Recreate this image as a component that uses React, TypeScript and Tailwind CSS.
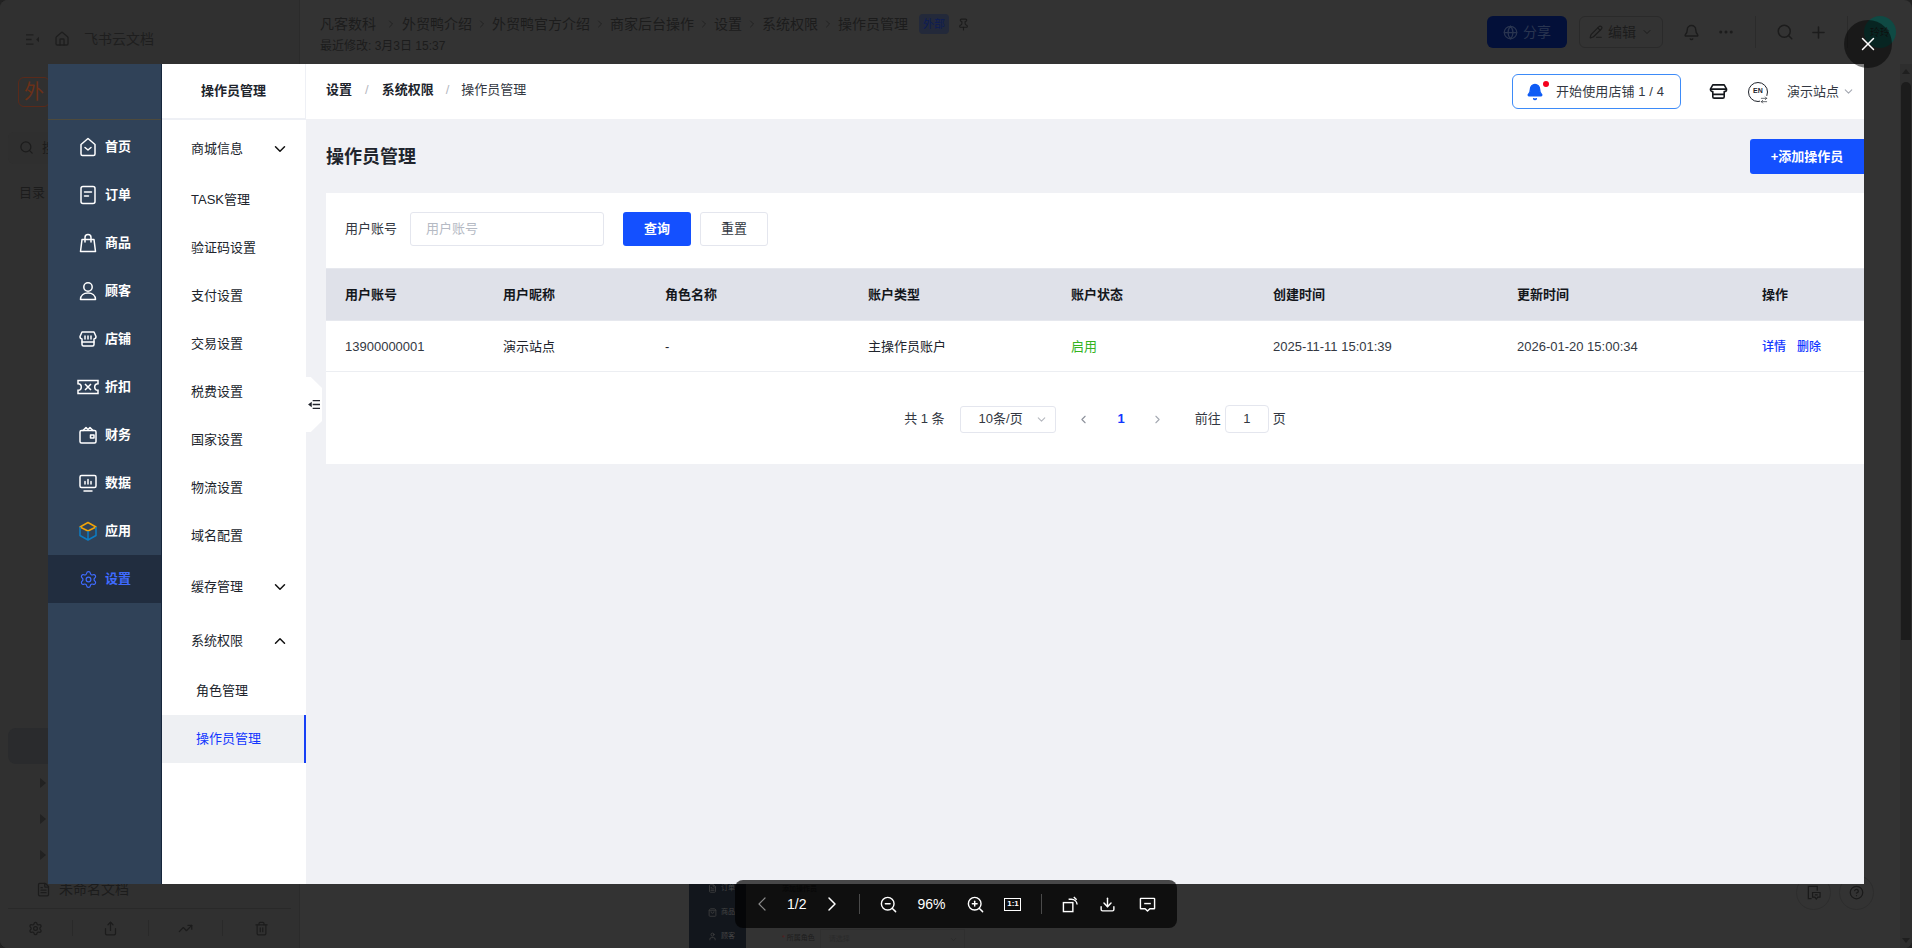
import type { ReactNode } from 'react';
import {
  ArrowRightLeft, Bell, ChevronDown, ChevronLeft, ChevronRight, ChevronUp, CircleHelp, Download, Ellipsis, FileText,
  Globe, Home, PencilLine, Pin, Plus, Search, Settings, Share, ShoppingBag, Trash2, TrendingUp, User, X, ZoomIn, ZoomOut,
} from 'lucide-react';

// Sidebar icons
const Svg = ({ children, className = 'text-white' }: { children: ReactNode; className?: string }) => (
  <svg viewBox="0 0 20 20" width="20" height="20" fill="none" stroke="currentColor" strokeWidth="1.5" strokeLinecap="round" strokeLinejoin="round" className={className}>
    {children}
  </svg>
);

const HomeIcon = () => (
  <Svg>
    <path d="M10 1.5 17 7.5V17a1.5 1.5 0 0 1-1.5 1.5h-11A1.5 1.5 0 0 1 3 17V7.500z" />
    <path d="m7 10.5 3 2.5 3-2.5" />
  </Svg>
);
const OrderIcon = () => (
  <Svg>
    <rect x="3" y="1.5" width="14" height="17" rx="2" />
    <path d="M6.5 7h7M6.5 11h4" />
  </Svg>
);
const BagIcon = () => (
  <Svg>
    <path d="M4 6.5h12l1.5 12h-15z" />
    <path d="M7 9V4.500a3 3 0 0 1 6 0V9" />
  </Svg>
);
const UserIcon = () => (
  <Svg>
    <circle cx="10" cy="6" r="4.2" />
    <path d="M2.5 18.500c0-4 3-6.500 7.500-6.500s7.500 2.500 7.500 6.500z" />
  </Svg>
);
const StoreIcon = () => (
  <Svg>
    <path d="M4 3h12l2 4.500a2.500 2.500 0 0 1-2 2.500v5.500a1.500 1.500 0 0 1-1.500 1.500h-9A1.500 1.500 0 0 1 4 15.500V10a2.500 2.500 0 0 1-2-2.500z" />
    <path d="M7 7v3M10 7v3M13 7v3M4 13h12" />
  </Svg>
);
const TicketIcon = () => (
  <svg viewBox="0 0 22 16" width="22" height="16" fill="none" stroke="currentColor" strokeWidth="1.5" className="text-white -mx-px">
    <path d="M1 1.5h20v3.200a3.300 3.300 0 0 0 0 6.600v3.200H1v-3.200a3.300 3.300 0 0 0 0-6.600z" />
    <path d="m8 5 6 6M14 5l-6 6" />
  </svg>
);
const WalletIcon = () => (
  <Svg>
    <path d="M3.5 5.5h13A1.500 1.500 0 0 1 18 7v9.500a1.500 1.500 0 0 1-1.500 1.500h-13A1.500 1.500 0 0 1 2 16.500V7a1.500 1.500 0 0 1 1.500-1.500z" />
    <path d="M5 5.500 8 2.500l2 2 2-2 3 3" />
    <rect x="12.5" y="10" width="3.5" height="3" />
  </Svg>
);
const MonitorIcon = () => (
  <Svg>
    <rect x="2" y="2.5" width="16" height="12" rx="1.5" />
    <path d="M7 11V8.500M10 11V6.500M13 11V8.500M6 18h8" />
  </Svg>
);
const BoxIcon = () => (
  <svg viewBox="0 0 20 20" width="20" height="20" fill="none" strokeWidth="1.5" strokeLinejoin="round">
    <path d="M10 1.5 18 6l-8 4-8-4z" stroke="#f0a30a" />
    <path d="M2 6v8.500l8 4.500 8-4.500V6M10 10v9" stroke="#0c7cc4" />
  </svg>
);
const ShopTopIcon = () => (
  <svg viewBox="0 0 20 20" width="19" height="19" fill="none" stroke="currentColor" strokeWidth="1.7" strokeLinejoin="round">
    <path d="M4 3h12l2.500 4.500a2.500 2.500 0 0 1-2.500 2.500v5.500a1.500 1.500 0 0 1-1.500 1.500h-9A1.500 1.500 0 0 1 4 15.500V10a2.500 2.500 0 0 1-2.500-2.500z" />
    <path d="M1.500 7.500h17M4 13h12" />
  </svg>
);
const CollapseIcon = () => (
  <svg viewBox="0 0 16 14" width="15" height="13" fill="none" stroke="currentColor" strokeWidth="1.4">
    <path d="M1 2h8M1 7h6M1 12h8" />
    <path d="m15 4-3 3 3 3z" fill="currentColor" stroke="none" />
  </svg>
);
const RotateIcon = () => (
  <svg viewBox="0 0 18 18" width="17" height="17" fill="none" stroke="currentColor" strokeWidth="1.5">
    <rect x="1.5" y="7" width="10" height="9.500" />
    <path d="M7 3.500h3a6 6 0 0 1 6 5.500M12.500 1l3 3" />
  </svg>
);
const CommentIcon = () => (
  <svg viewBox="0 0 18 18" width="17" height="17" fill="none" stroke="currentColor" strokeWidth="1.5" strokeLinejoin="round">
    <path d="M2 2.500h14a.5.5 0 0 1 .5.5v10a.5.5 0 0 1-.5.5h-4.500L9 16l-2.500-2.500H2a.5.5 0 0 1-.5-.5V3a.5.5 0 0 1 .5-.5z" />
    <path d="M5.500 8h7" />
  </svg>
);
const DocCommentIcon = () => (
  <svg viewBox="0 0 16 16" width="15" height="15" fill="none" stroke="currentColor" strokeWidth="1.3">
    <path d="M12 6V1.500H2.500v13H6" />
    <path d="M7 8h8v5h-2.500L11 15l-1.500-2H7z" />
    <path d="M9.500 10.500h3" />
  </svg>
);

const navItems = [
  { label: '首页', icon: <HomeIcon /> },
  { label: '订单', icon: <OrderIcon /> },
  { label: '商品', icon: <BagIcon /> },
  { label: '顾客', icon: <UserIcon /> },
  { label: '店铺', icon: <StoreIcon /> },
  { label: '折扣', icon: <TicketIcon /> },
  { label: '财务', icon: <WalletIcon /> },
  { label: '数据', icon: <MonitorIcon /> },
  { label: '应用', icon: <BoxIcon /> },
];

const subItems = ['TASK管理', '验证码设置', '支付设置', '交易设置', '税费设置', '国家设置', '物流设置', '域名配置'];

const crumbs = ['凡客数科', '外贸鸭介绍', '外贸鸭官方介绍', '商家后台操作', '设置', '系统权限', '操作员管理'];

const tableCols = 'grid grid-cols-[158px_162px_203px_203px_202px_244px_245px_1fr] pl-[19px] items-center';
const headers = ['用户账号', '用户昵称', '角色名称', '账户类型', '账户状态', '创建时间', '更新时间', '操作'];

// The Feishu doc page behind the lightbox
const DocPage = () => (
  <div className="flex h-full flex-col bg-[#333333] text-[#1c1c1c] rounded-lg overflow-hidden">
    <div className="flex flex-1 min-h-0">
      <aside className="flex w-[300px] flex-col bg-[#303030] border-r border-[#2b2b2b]">
        <div className="flex h-[64px] shrink-0 items-center gap-[14px] pl-[25px] pt-[14px] text-[14px] text-[#1e1e1e]">
          <CollapseIcon />
          <Home size={16} />
          <span>飞书云文档</span>
        </div>
        <div className="ml-[18px] mt-[13px] flex h-[30px] w-[32px] items-center justify-center rounded-md border border-[#5a2a1a] text-[20px] text-[#6b3018]">外</div>
        <div className="ml-[8px] mt-[25px] flex h-[32px] w-[280px] items-center gap-2 rounded-md bg-[#2f2f2f] pl-[11px] text-[13px]">
          <Search size={15} />
          <span>搜索</span>
        </div>
        <div className="ml-[19px] mt-[19px] text-[13px]">目录</div>
        <div className="ml-[8px] mt-[526px] h-[36px] w-[280px] rounded-lg bg-[#2a2b2d]" />
        <div className="ml-[40px] mt-[14px] flex flex-col gap-[26px]">
          {[0, 1, 2].map(i => (
            <div key={i} className="h-0 w-0 border-y-[5px] border-l-[6px] border-y-transparent border-l-[#222222]" />
          ))}
        </div>
        <div className="ml-[36px] mt-[19px] flex items-center gap-[8px] text-[14px]">
          <FileText size={15} />
          <span>未命名文档</span>
        </div>
        <div className="mx-[8px] mt-[8px] border-t border-[#292929]" />
        <div className="flex h-[40px] items-center">
          <div className="flex h-[16px] w-[73px] items-center justify-center border-r border-[#292929]"><Settings size={15} /></div>
          <div className="flex h-[16px] w-[76px] items-center justify-center border-r border-[#292929]"><Share size={15} /></div>
          <div className="flex h-[16px] w-[75px] items-center justify-center border-r border-[#292929]"><TrendingUp size={15} /></div>
          <div className="flex h-[16px] w-[76px] items-center justify-center"><Trash2 size={15} /></div>
        </div>
      </aside>

      <main className="relative flex flex-1 flex-col">
        <div className="flex h-[64px] items-start justify-between pl-[20px] pr-[16px] pt-[14px]">
          <div>
            <div className="flex items-center text-[14px] leading-[20px]">
              {crumbs.map((c, i) => (
                <span key={c} className="flex items-center">
                  {i > 0 && <ChevronRight size={12} className={i === 1 ? 'ml-[9px] mr-[5px] text-[#222222]' : 'mx-[4px] text-[#222222]'} />}
                  {c}
                </span>
              ))}
              <span className="ml-[11px] rounded bg-[#23293a] px-[4px] text-[11px] text-[#0d1c55]">外部</span>
              <Pin size={13} className="ml-[8px]" />
            </div>
            <div className="mt-[4px] text-[12px] leading-[16px]">最近修改: 3月3日 15:37</div>
          </div>
          <div className="flex items-center pt-[2px]">
            <div className="flex h-[32px] w-[80px] items-center justify-center gap-[5px] rounded-md bg-[#031039] text-[14px] text-[#2a3550]">
              <Globe size={15} /> 分享
            </div>
            <div className="ml-[12px] flex h-[32px] w-[84px] items-center justify-center gap-[5px] rounded-md border border-[#2a2a2a] text-[14px]">
              <PencilLine size={14} /> 编辑 <ChevronDown size={12} />
            </div>
            <Bell size={17} className="ml-[20px]" />
            <Ellipsis size={18} className="ml-[17px]" />
            <div className="ml-[20px] h-[32px] w-px bg-[#2b2b2b]" />
            <Search size={18} className="ml-[20px]" />
            <Plus size={19} className="ml-[15px]" />
            <div className="ml-[19px] h-[32px] w-px bg-[#2b2b2b]" />
            <div className="ml-[16px] flex h-[32px] w-[32px] items-center justify-center rounded-full bg-[#0f4a44] text-[10px]">玲玲</div>
          </div>
        </div>

        {/* next page of the document, mostly hidden by the lightbox */}
        <div className="mt-auto ml-[389px] flex h-[64px] w-[400px] text-[#2d2d2d]">
          <div className="flex w-[57px] flex-col gap-[8px] bg-[#12161c] pl-[19px] text-[7px] text-[#444444]">
            <span className="flex h-[16px] items-center gap-1 -mt-[4px]"><FileText size={9} /> 订单</span>
            <span className="flex h-[16px] items-center gap-1"><ShoppingBag size={9} /> 商品</span>
            <span className="flex h-[16px] items-center gap-1"><User size={9} /> 顾客</span>
          </div>
          <div className="flex flex-1 flex-col justify-between pl-[36px] text-[7px] text-[#1d1d1d]">
            <span className="font-bold">添加操作员</span>
            <div className="flex items-center">
              <span className="mr-[5px]"><span className="text-[#5a1a1a]">*</span> 所属角色</span>
              <div className="flex h-[19px] w-[145px] items-center justify-between border border-b-0 border-[#2f2f2f] pl-[8px] pr-[6px] text-[#2a2a2a]">
                请选择
                <ChevronDown size={9} />
              </div>
            </div>
          </div>
        </div>

        <div className="absolute bottom-[38px] right-[38px] flex gap-[8px] text-[#1a1a1a]">
          <div className="flex h-[35px] w-[35px] items-center justify-center rounded-full border border-[#2d2d2d]"><DocCommentIcon /></div>
          <div className="flex h-[35px] w-[35px] items-center justify-center rounded-full border border-[#2d2d2d]"><CircleHelp size={15} /></div>
        </div>

        {/* scrollbar */}
        <div className="absolute right-0 top-[64px] flex h-[884px] w-[12px] flex-col items-center bg-[#2e2e2e]">
          <div className="mt-[5px] h-0 w-0 border-x-[4px] border-b-[5px] border-x-transparent border-b-[#1f1f1f]" />
          <div className="mt-[8px] h-[558px] w-[10px] rounded-t-[5px] bg-[#1c1c1c]" />
          <div className="mt-auto mb-[5px] h-0 w-0 border-x-[4px] border-t-[5px] border-x-transparent border-t-[#1f1f1f]" />
        </div>
      </main>
    </div>
  </div>
);

const Sidebar = () => (
  <aside className="flex w-[114px] shrink-0 flex-col bg-[#304258] border-r border-[#16263c]">
    <div className="h-[56px] shrink-0 border-b border-[#4d4a3c]" />
    <nav className="mt-px flex flex-col pt-[2px]">
      {navItems.map(item => (
        <div key={item.label} className="flex h-[48px] items-center gap-[7px] pl-[30px] text-[13px] font-bold text-white">
          <span className="flex w-[20px] justify-center">{item.icon}</span>
          {item.label}
        </div>
      ))}
      <div className="flex h-[48px] items-center gap-[7px] bg-[#212d3f] pl-[30px] text-[13px] font-bold text-[#3f6bff]">
        <span className="flex w-[20px] justify-center"><Settings size={19} strokeWidth={1.5} /></span>
        设置
      </div>
    </nav>
  </aside>
);

const SubMenu = () => (
  <div className="relative flex w-[144px] shrink-0 flex-col bg-white text-[13px] text-[#20242c]">
    <div className="flex h-[56px] shrink-0 items-center justify-center border-b-2 border-r border-[#eef0f5] text-[13px] font-bold">操作员管理</div>
    <div className="mt-[2px] flex h-[54px] items-center justify-between pl-[29px] pr-[17px]">
      商城信息
      <ChevronDown size={18} className="text-[#111111]" />
    </div>
    {subItems.map(label => (
      <div key={label} className="flex h-[48px] items-center pl-[29px]">{label}</div>
    ))}
    <div className="flex h-[54px] items-center justify-between pl-[29px] pr-[17px]">
      缓存管理
      <ChevronDown size={18} className="text-[#111111]" />
    </div>
    <div className="flex h-[53px] items-center justify-between pl-[29px] pr-[17px]">
      系统权限
      <ChevronUp size={18} className="text-[#111111]" />
    </div>
    <div className="flex h-[48px] items-center pl-[34px]">角色管理</div>
    <div className="flex h-[48px] items-center border-r-2 border-[#1740f5] bg-[#eef0f3] pl-[34px] text-[#1237ff]">操作员管理</div>

    {/* collapse handle */}
    <div className="absolute left-full top-[313px] flex h-[55px] w-[16px] items-center justify-center bg-white [clip-path:polygon(0_0,30%_0,100%_20%,100%_80%,30%_100%,0_100%)]">
      <svg viewBox="0 0 14 12" width="13" height="11" fill="#20242c">
        <path d="M0 6 4 3v6z" />
        <path d="M5 1h8v1.500H5zM5 5.200h8v1.500H5zM5 9.500h8V11H5z" />
      </svg>
    </div>
  </div>
);

const TopBar = () => (
  <header className="flex h-[55px] shrink-0 items-center justify-between bg-white pl-[20px] pr-[9px] text-[13px]">
    <div className="flex items-center pb-[3px] text-[#20242c]">
      <span className="font-bold">设置</span>
      <span className="mx-[13px] text-[#b5b8bf]">/</span>
      <span className="font-bold">系统权限</span>
      <span className="mx-[12px] text-[#b5b8bf]">/</span>
      <span className="text-[#333842]">操作员管理</span>
    </div>
    <div className="flex items-center">
      <div className="flex h-[35px] w-[169px] items-center rounded-md border border-[#3d8bf8] pl-[13px] text-[#333842]">
        <span className="relative mr-[10px] flex">
          <Bell size={18} fill="#0f5cf5" stroke="#0f5cf5" />
          <span className="absolute -right-[5px] -top-[2px] h-[6px] w-[6px] rounded-full bg-[#f5001c]" />
        </span>
        <span className="ml-[2px] tracking-[0.1px]">开始使用店铺 1 / 4</span>
      </div>
      <span className="ml-[28px] flex text-[#14171c]"><ShopTopIcon /></span>
      <span className="relative ml-[20px] flex h-[20px] w-[20px] items-center justify-center rounded-full border border-[#20242c] text-[7px] font-bold text-[#20242c]">
        EN
        <span className="absolute -bottom-[3px] -right-[1px] flex bg-white"><ArrowRightLeft size={8} /></span>
      </span>
      <span className="ml-[19px] text-[#333842]">演示站点</span>
      <ChevronDown size={13} className="ml-[3px] text-[#a5a9b2]" />
    </div>
  </header>
);

const Table = () => (
  <div className="text-[13px]">
    <div className={`${tableCols} h-[53px] border-y border-[#e6e8ee] bg-[#dfe1e9] font-bold text-[#14171c]`}>
      {headers.map(h => <div key={h}>{h}</div>)}
    </div>
    <div className={`${tableCols} h-[51px] border-b border-[#eceef2] pt-[2px] text-[#20242c]`}>
      <div className="text-[#333842]">13900000001</div>
      <div>演示站点</div>
      <div>-</div>
      <div>主操作员账户</div>
      <div className="text-[#35b31f]">启用</div>
      <div className="text-[#333842]">2025-11-11 15:01:39</div>
      <div className="text-[#333842]">2026-01-20 15:00:34</div>
      <div className="flex gap-[11px] text-[12px] font-medium text-[#1237ff]">
        <span>详情</span>
        <span>删除</span>
      </div>
    </div>
  </div>
);

const Pagination = () => (
  <div className="flex h-[92px] items-center justify-center pt-[2px] text-[13px] text-[#333842]">
    <span>共 1 条</span>
    <div className="ml-[15px] flex h-[27px] w-[96px] items-center rounded-[3px] border border-[#e4e6ee] pl-[18px] pr-[7px]">
      10条/页
      <ChevronDown size={13} className="ml-auto text-[#b5b8bf]" />
    </div>
    <ChevronLeft size={13} className="ml-[21px] text-[#8d919b]" />
    <span className="ml-[28px] font-bold text-[#1237ff]">1</span>
    <ChevronRight size={13} className="ml-[26px] text-[#a5a9b2]" />
    <span className="ml-[31px]">前往</span>
    <div className="ml-[4px] flex h-[28px] w-[44px] items-center justify-center rounded-[4px] border border-[#e4e6ee]">1</div>
    <span className="ml-[4px]">页</span>
  </div>
);

const Content = () => (
  <div className="flex min-w-0 flex-1 flex-col bg-[#f0f1f5]">
    <TopBar />
    <div className="pl-[20px]">
      <div className="mt-[20px] flex h-[35px] items-center justify-between">
        <h1 className="pt-[2px] text-[18px] font-bold text-[#20242c]">操作员管理</h1>
        <button className="h-[35px] w-[114px] rounded-l-[3px] bg-[#1450ff] text-[13px] font-bold text-white">+添加操作员</button>
      </div>
      <section className="mt-[19px] bg-white">
        <div className="flex h-[75px] items-center pl-[19px] pb-[3px] text-[13px]">
          <label className="text-[#333842]">用户账号</label>
          <div className="ml-[13px] flex h-[34px] w-[194px] items-center rounded-[3px] border border-[#e4e6ee] pl-[15px] text-[#b5bac4]">用户账号</div>
          <button className="ml-[19px] h-[34px] w-[68px] rounded-[3px] bg-[#1450ff] font-bold text-white">查询</button>
          <button className="ml-[9px] h-[34px] w-[68px] rounded-[3px] border border-[#e4e6ee] text-[#333842]">重置</button>
        </div>
        <Table />
        <Pagination />
      </section>
    </div>
  </div>
);

const Toolbar = () => (
  <div className="absolute left-[735px] top-[880px] flex h-[48px] w-[442px] items-center rounded-lg bg-black/70 text-[14px] text-white">
    <ChevronLeft size={24} strokeWidth={1.2} className="ml-[15px] text-[#8a8a8a]" />
    <span className="ml-[13px] font-medium">1/2</span>
    <ChevronRight size={24} strokeWidth={1.5} className="ml-[14px]" />
    <div className="ml-[15px] h-[20px] w-px bg-[#4a4a4a]" />
    <ZoomOut size={19} strokeWidth={1.8} className="ml-[19px]" />
    <span className="ml-[19px] w-[32px] font-medium">96%</span>
    <ZoomIn size={19} strokeWidth={1.8} className="ml-[17px]" />
    <span className="ml-[19px] flex h-[13px] w-[17px] items-center justify-center border border-white text-[8px] font-bold">1:1</span>
    <div className="ml-[20px] h-[20px] w-px bg-[#4a4a4a]" />
    <span className="ml-[20px] flex"><RotateIcon /></span>
    <Download size={17} className="ml-[20px]" />
    <span className="ml-[23px] flex"><CommentIcon /></span>
  </div>
);

export default function App() {
  return (
    <div className="relative h-[948px] w-[1912px] overflow-hidden bg-[#222222] font-['Liberation_Sans','Noto_Sans_CJK_SC',sans-serif]">
      <DocPage />

      {/* lightbox */}
      <div className="absolute left-[48px] top-[64px] flex h-[820px] w-[1816px] overflow-hidden">
        <Sidebar />
        <SubMenu />
        <Content />
      </div>

      <button className="absolute left-[1844px] top-[20px] flex h-[48px] w-[48px] items-center justify-center rounded-full bg-black/50 text-white">
        <X size={22} strokeWidth={1.6} />
      </button>
      <Toolbar />
    </div>
  );
}
